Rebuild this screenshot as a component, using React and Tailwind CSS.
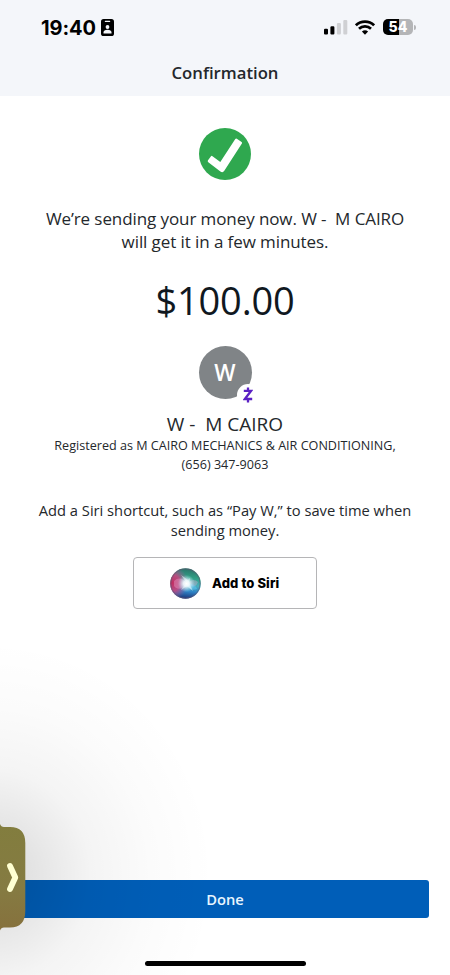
function StatusBar() {
  return (
    <div className="flex h-[54px] items-center justify-between pl-[41px] pr-[34px] text-black">
      <div className="flex items-center gap-[5px]">
        <span className="pt-[2px] font-[Inter,sans-serif] text-[20px] font-bold leading-none tracking-[-0.1px]">19:40</span>
        <svg width="13" height="17" viewBox="0 0 13 17">
          <rect width="13" height="17" rx="2.6" fill="#000" />
          <rect x="3.8" y="1.7" width="5.4" height="1.3" rx=".6" fill="#f4f6fa" />
          <circle cx="6.5" cy="8" r="1.9" fill="#f4f6fa" />
          <path d="M2.5 14.5v-1c0-1.8 1.5-2.7 4-2.7s4 .9 4 2.7v1z" fill="#f4f6fa" />
        </svg>
      </div>
      <div className="flex items-center">
        <svg width="24" height="15" viewBox="0 0 24 15">
          <rect x="0" y="8.8" width="4" height="5.7" rx="1.1" />
          <rect x="6.4" y="6.3" width="4" height="8.2" rx="1.1" />
          <rect x="12.9" y="3" width="4" height="11.5" rx="1.1" fill="#cfd0d3" />
          <rect x="19.3" y="0" width="4" height="14.5" rx="1.1" fill="#cfd0d3" />
        </svg>
        <svg className="ml-[7px]" width="20" height="15" viewBox="0 0 20 15" fill="none" stroke="#000" strokeWidth="2.7">
          <path d="M.9 5.3a13 13 0 0 1 18.2 0" />
          <path d="M4 8.8a8.6 8.6 0 0 1 12 0" />
          <path d="M10 14.8l-3.1-3.2a4.6 4.6 0 0 1 6.2 0z" fill="#000" stroke="none" />
        </svg>
        <div className="ml-[8px] flex h-4 w-[30px] items-center justify-center rounded-[5px] bg-linear-to-r from-black from-54% to-[#b4b5b7] to-54% font-[Inter,sans-serif] text-[14px] font-extrabold leading-none text-white">
          54
        </div>
        <div className="ml-px h-[5px] w-[2px] rounded-r-full bg-[#b4b5b7]" />
      </div>
    </div>
  );
}

function CheckBadge() {
  return (
    <svg className="h-[52px] w-[52px]" viewBox="0 0 52 52">
      <circle cx="26" cy="26" r="26" fill="#2fa84f" />
      <path
        d="M9 32.200L12 28.300Q12.600 27.500 13.500 28.200L21.300 34L36.300 11Q36.900 10.100 37.800 10.700L42.600 14Q43.400 14.600 42.900 15.500L25.300 42.800Q23.700 45.200 21.400 43.400L9.300 34.200Q8.200 33.300 9 32.200Z"
        fill="#fff"
      />
    </svg>
  );
}

function Avatar() {
  return (
    <div className="relative flex h-[53px] w-[53px] items-center justify-center rounded-full bg-[#808487]">
      <span className="pt-[2px] text-[22.5px] font-semibold leading-none text-white">W</span>
      <div className="absolute left-[38px] top-[38px] flex h-[22px] w-[22px] items-center justify-center rounded-full bg-white">
        <svg width="10" height="16" viewBox="0 0 10 16" fill="none" stroke="#5b21c4" strokeWidth="2.3">
          <path d="M.8 3.900h7.200L1.900 12h7.300M5 .6v3M5 12v3.400" />
        </svg>
      </div>
    </div>
  );
}

function SiriOrb() {
  return (
    <svg className="h-[31px] w-[31px]" viewBox="0 0 31 31">
      <defs>
        <linearGradient id="base" x1="0.6" y1="0" x2="0.5" y2="1">
          <stop offset="0" stopColor="#2a6f68" />
          <stop offset=".3" stopColor="#2fa085" />
          <stop offset=".55" stopColor="#49aebc" />
          <stop offset=".75" stopColor="#2f86c8" />
          <stop offset="1" stopColor="#1b3277" />
        </linearGradient>
        <radialGradient id="pink" cx=".05" cy=".48" r=".55">
          <stop offset="0" stopColor="#c22b60" />
          <stop offset=".5" stopColor="#c4467f" stopOpacity=".9" />
          <stop offset="1" stopColor="#9b5a9b" stopOpacity="0" />
        </radialGradient>
        <radialGradient id="glow" cx=".53" cy=".5" r=".28">
          <stop offset="0" stopColor="#fff" />
          <stop offset=".35" stopColor="#f2fbff" stopOpacity=".9" />
          <stop offset="1" stopColor="#b8e6f5" stopOpacity="0" />
        </radialGradient>
      </defs>
      <circle cx="15.5" cy="15.5" r="15.3" fill="url(#base)" />
      <circle cx="15.5" cy="15.5" r="15.3" fill="url(#pink)" />
      <path d="M4 13c5-5 10-2 13 3 4-5 8-5 11-2-2 6-7 5-11 2C12 22 7 22 4 18z" fill="#f0b0d8" fillOpacity=".35" />
      <path d="M16 16c5-1 10 1 11 5-4 2-9 0-11-5z" fill="#5ec5ef" fillOpacity=".6" />
      <path d="M16.500 14.500L11 7l7 5 2-2-1 5 4 8-6-5-6 4z" fill="#fff" fillOpacity=".5" />
      <circle cx="15.5" cy="15.5" r="15.3" fill="url(#glow)" />
      <circle cx="15.5" cy="15.5" r="14.7" fill="none" stroke="#63566f" strokeOpacity=".6" strokeWidth="1" />
    </svg>
  );
}

function SideHandle() {
  return (
    <div className="absolute left-0 top-[823px] h-[109px] w-[26px]">
      <svg width="26" height="109" viewBox="0 0 26 109">
        <defs>
          <linearGradient id="handle" x1="0" y1="0" x2="0" y2="1">
            <stop offset="0" stopColor="#827d3e" />
            <stop offset=".6" stopColor="#857b42" />
            <stop offset="1" stopColor="#86713d" />
          </linearGradient>
        </defs>
        <path d="M0 1Q1 4 4 4H10Q25.3 4 25.3 20V88Q25.3 104.500 10 104.500H4Q1 104.500 0 107.500Z" fill="url(#handle)" />
        <path d="M10 43L15.300 54.500L10 66" fill="none" stroke="#ffffd2" strokeWidth="5.800" strokeLinecap="round" strokeLinejoin="round" />
      </svg>
    </div>
  );
}

export default function App() {
  return (
    <div className="relative flex h-[975px] w-[450px] flex-col overflow-hidden bg-white font-['Open_Sans',sans-serif] text-[#24282c]">
      <header className="h-24 shrink-0 bg-[#f4f6fa]">
        <StatusBar />
        <h1 className="mt-[7px] text-center text-[16.7px] font-semibold leading-6 text-[#24282c]">Confirmation</h1>
      </header>

      <main className="flex flex-1 flex-col items-center whitespace-nowrap pt-8 text-center">
        <CheckBadge />
        <p className="mt-[27px] whitespace-pre text-[17px] leading-[23px] tracking-[-0.09px]">
          {"We’re sending your money now. W -  M CAIRO\nwill get it in a few minutes."}
        </p>
        <p className="mt-[23px] text-[38px] leading-[48px] tracking-[-0.2px] text-[#10181f]">$100.00</p>
        <div className="mt-[22px]">
          <Avatar />
        </div>
        <p className="mt-[12px] whitespace-pre text-[19px] leading-[26px]">{"W -  M CAIRO"}</p>
        <p className="text-[12.6px] leading-[18.5px]">
          Registered as M CAIRO MECHANICS &amp; AIR CONDITIONING,
          <br />
          (656) 347-9063
        </p>
        <p className="mt-[26px] text-[14.7px] leading-[20px]">
          Add a Siri shortcut, such as “Pay W,” to save time when
          <br />
          sending money.
        </p>
        <button className="mt-[17px] flex h-[52px] w-[184px] items-center gap-[11px] rounded-[4px] border border-[#b5b5b7] bg-white pl-9">
          <SiriOrb />
          <span className="pt-px font-[Inter,sans-serif] text-[13px] font-extrabold tracking-[0.1px] text-black">Add to Siri</span>
        </button>
      </main>

      <footer className="flex h-[95px] shrink-0 flex-col items-center">
        <button className="h-[38px] w-[408px] rounded-[3px] bg-[#005eb8] pt-px text-[14.7px] font-semibold leading-[37px] text-[#e8f6ff]">
          Done
        </button>
        <div className="mt-[43px] h-[5px] w-[161px] rounded-full bg-black" />
      </footer>

      <div className="pointer-events-none absolute bottom-0 left-0 h-[335px] w-[225px] bg-[radial-gradient(ellipse_225px_235px_at_-10px_235px,rgba(0,0,0,0.15)_0%,rgba(0,0,0,0.105)_20%,rgba(0,0,0,0.045)_45%,rgba(0,0,0,0.014)_72%,transparent_100%)]" />
      <SideHandle />
    </div>
  );
}
